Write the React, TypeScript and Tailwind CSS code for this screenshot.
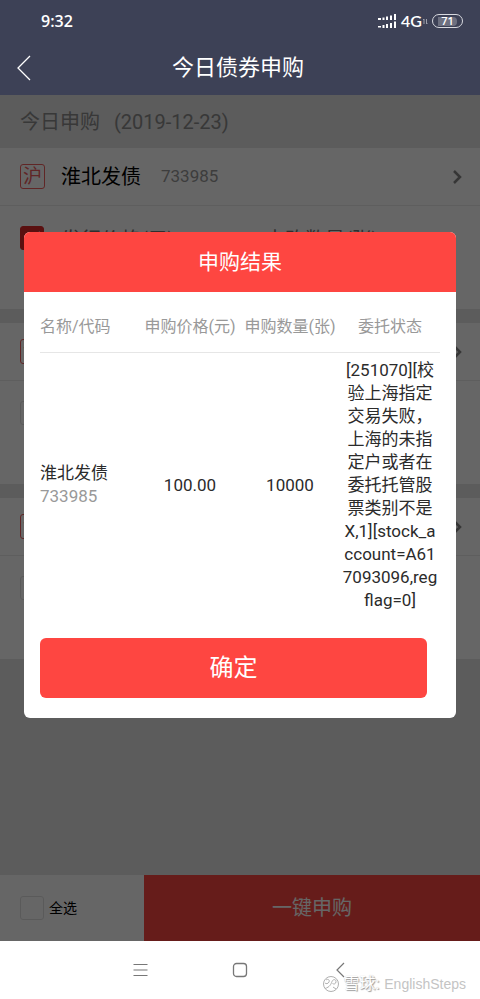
import { useState } from "react";

const bonds = [
  { id: 1, market: "沪", name: "淮北发债", code: "733985", checked: true },
  { id: 2, market: "沪", name: "", code: "", checked: false },
  { id: 3, market: "沪", name: "", code: "", checked: false },
];

const results = [
  {
    name: "淮北发债",
    code: "733985",
    price: "100.00",
    amount: "10000",
    status:
      "[251070][校验上海指定交易失败，上海的未指定户或者在委托托管股票类别不是X,1][stock_account=A617093096,regflag=0]",
  },
];

function StatusBar() {
  return (
    <div className="flex h-[42px] items-center justify-between pr-[17px] pl-[41px] font-['Open_Sans','Noto_Sans',sans-serif] font-semibold">
      <span className="text-[16px] leading-6">9:32</span>
      <div className="flex items-center">
        <svg width="20" height="14" viewBox="0 0 20 14" fill="currentColor" aria-hidden="true">
          <path d="M1 4h3v2H1zM5.500 3.500h2V6h-2zM9 2.500h2V6H9zM13 1.500h2V6h-2zM17 0h2v6h-2z" />
          <path d="M1 12h3v1.500H1zM5.500 11h2v3h-2zM9 10h2v4H9zM13 9h2v5h-2zM17 7.500h2V14h-2z" />
        </svg>
        <span className="ml-1 font-['Lato',sans-serif] text-[16px] leading-6">4G</span>
        <svg className="opacity-50" width="6" height="8" viewBox="0 0 6 8" fill="none" stroke="currentColor" aria-hidden="true">
          <path d="M2 7V2L1 3M4.500 2v5l1-1" />
        </svg>
        <span className="ml-1 flex h-[14px] w-[31px] items-center justify-center rounded-full border-[1.5px] border-[#d8d9df]">
          <span className="flex h-[9px] w-[19px] items-center justify-center rounded-r-sm bg-white/25 text-[11px] leading-3">
            71
          </span>
        </span>
      </div>
    </div>
  );
}

function BondCard({ market, name, code, checked }: (typeof bonds)[number]) {
  const [selected, setSelected] = useState(checked);

  return (
    <section className="mb-[14px] bg-white">
      <div className="flex h-[58px] items-center border-b border-[#ececec] pr-[17px] pl-5">
        <span className="flex size-[25px] items-center justify-center rounded-[3px] border border-[#f0605f] text-[19px] leading-6 text-[#f0605f]">
          {market}
        </span>
        <span className="ml-4 text-[20px] text-black">{name}</span>
        <span className="ml-5 text-[17px] text-[#999]">{code}</span>
        <svg className="ml-auto" width="11" height="16" viewBox="0 0 11 16" fill="none" stroke="#888" strokeWidth="2.500" aria-hidden="true">
          <path d="M2 2l6 6-6 6" />
        </svg>
      </div>
      <div className="flex h-[103px] items-start px-5 pt-5">
        <label className="relative block size-6 shrink-0">
          <input
            type="checkbox"
            aria-label={`选择${name}`}
            checked={selected}
            onChange={() => setSelected(!selected)}
            className="peer block size-6 appearance-none rounded-[3px] border border-[#e2e2e2] checked:border-[#e02a2a] checked:bg-[#e02a2a]"
          />
          <svg className="absolute inset-0 hidden peer-checked:block" width="24" height="24" viewBox="0 0 24 24" fill="none" stroke="#fff" strokeWidth="2" aria-hidden="true">
            <path d="M5 12l5 5L20 6" />
          </svg>
        </label>
        {name && (
          <div className="mt-0.5 ml-[17px] grid flex-1 grid-cols-[204px_1fr] text-[20px] leading-6 text-[#777]">
            <span>发行价格(元)</span>
            <span>申购数量(张)</span>
          </div>
        )}
      </div>
    </section>
  );
}

function ResultDialog() {
  return (
    <div
      role="dialog"
      aria-modal="true"
      aria-labelledby="result-title"
      className="absolute inset-x-6 top-[137px] overflow-hidden rounded-[6px] bg-white"
    >
      <h2 id="result-title" className="bg-[#fe4641] text-center text-[21px] leading-[60px] text-white">
        申购结果
      </h2>
      <div className="px-4 pb-5">
        <table className="w-full table-fixed text-center text-[17px] leading-[23px] text-[#2b2b2b]">
          <thead>
            <tr className="h-[60px] border-b border-[#e6e6e6] text-[16px] whitespace-nowrap text-[#999]">
              <th className="pt-[10px] text-left font-normal">名称/代码</th>
              <th className="pt-[10px] font-normal">申购价格(元)</th>
              <th className="pt-[10px] font-normal">申购数量(张)</th>
              <th className="pt-[10px] font-normal">委托状态</th>
            </tr>
          </thead>
          <tbody>
            {results.map((r) => (
              <tr key={r.code}>
                <td className="text-left">
                  <div>{r.name}</div>
                  <div className="text-[#999]">{r.code}</div>
                </td>
                <td>{r.price}</td>
                <td>{r.amount}</td>
                <td className="px-0.5 py-[6px] break-all">{r.status}</td>
              </tr>
            ))}
          </tbody>
        </table>
        <div className="pt-5 pr-[13px]">
          <button className="block h-[60px] w-full rounded-[6px] bg-[#fe4641] text-[24px] text-white">
            确定
          </button>
        </div>
      </div>
    </div>
  );
}

export default function App() {
  return (
    <div className="flex min-h-screen flex-col bg-white font-['Roboto','Noto_Sans_CJK_SC',sans-serif]">
      <header className="h-[95px] bg-[#3d4156] text-white">
        <StatusBar />
        <div className="grid h-[51px] grid-cols-[46px_1fr_50px] items-center">
          <button aria-label="返回" className="pl-4">
            <svg width="16" height="26" viewBox="0 0 16 26" fill="none" stroke="currentColor" strokeWidth="1.300">
              <path d="M14 1L2 13l12 12" />
            </svg>
          </button>
          <h1 className="text-center text-[22px]">今日债券申购</h1>
        </div>
      </header>

      <main className="relative flex flex-1 flex-col bg-[#e5e5e5]">
        <div className="flex h-[53px] items-center gap-[14px] px-5 text-[20px] text-[#8c8c8c]">
          <span>今日申购</span>
          <span>(2019-12-23)</span>
        </div>
        {bonds.map((b) => (
          <BondCard key={b.id} {...b} />
        ))}
        <div className="mt-auto flex h-[66px]">
          <label className="flex w-[30%] items-center gap-[5px] bg-white pl-5 text-[14px] text-black">
            <input type="checkbox" className="size-6 appearance-none rounded-[3px] border border-[#e2e2e2]" />
            全选
          </label>
          <button className="flex-1 bg-[#fe4641] text-[20px] text-white">一键申购</button>
        </div>
        <div className="absolute inset-0 bg-black/60" />
        <ResultDialog />
      </main>

      <nav className="relative flex h-[58px] items-center justify-center gap-[84px] text-[#777]">
        <button aria-label="菜单">
          <svg width="16" height="16" viewBox="0 0 16 16" fill="none" stroke="currentColor" strokeWidth="1.200">
            <path d="M1.500 2.500h14M1.500 8h14M1.500 13.500h14" />
          </svg>
        </button>
        <button aria-label="主页">
          <svg width="16" height="16" viewBox="0 0 16 16" fill="none" stroke="currentColor" strokeWidth="1.300">
            <rect x="1.500" y="1.500" width="13" height="13" rx="3" />
          </svg>
        </button>
        <button aria-label="后退">
          <svg width="16" height="16" viewBox="0 0 16 16" fill="none" stroke="currentColor" strokeWidth="1.200">
            <path d="M12 1L5 8l7 7" />
          </svg>
        </button>
        <div className="absolute right-[14px] bottom-[5px] flex items-center">
          <svg className="mr-[3px]" width="18" height="18" viewBox="0 0 18 18" fill="#fff" stroke="#b0b0b0" aria-hidden="true">
            <circle cx="9" cy="9" r="7.500" />
            <path d="M3 13.500C8 12 9 9 10 6.500c1-2.500 4-2.500 4 0s-2 3-3.500 2M4 5c2-1.500 4 0 3 2s-3 2-4 1M11 12l3 2" fill="none" />
          </svg>
          <span className="text-[16px] leading-5 text-white [text-shadow:1px_1px_1px_#999,0_0_1px_#bbb]">雪球:</span>
          <span className="ml-[5px] font-['Liberation_Sans',sans-serif] text-[14px] leading-5 text-[#c4c4c4]">
            EnglishSteps
          </span>
        </div>
      </nav>
    </div>
  );
}
